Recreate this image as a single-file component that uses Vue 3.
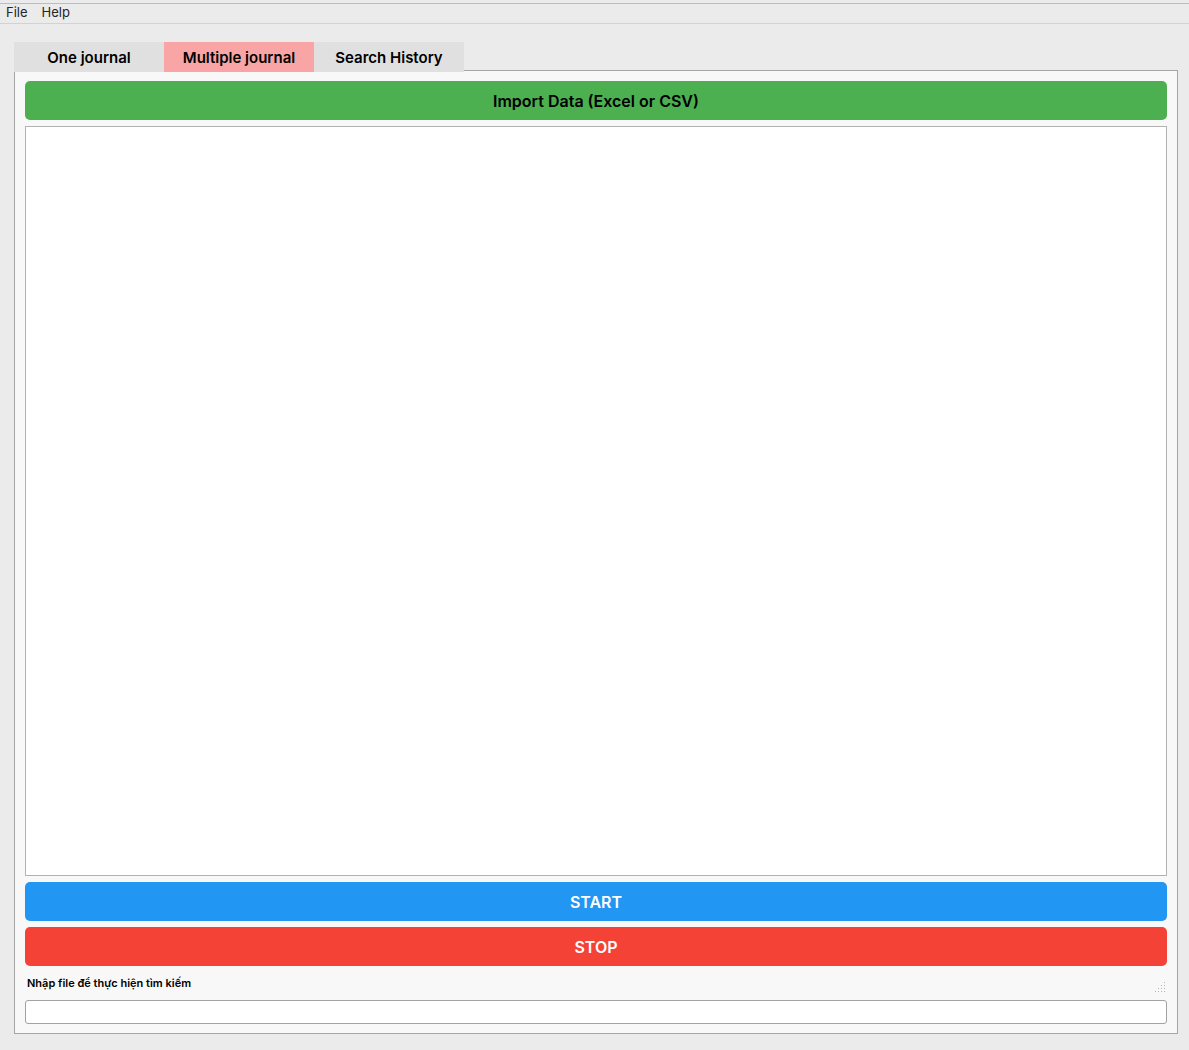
<script setup>
import { ref } from 'vue'

const menus = ['File', 'Help']
const tabs = ['One journal', 'Multiple journal', 'Search History']
const active = ref(1)
const output = ref('')
const query = ref('')

const gripDots = []
for (let row = 0; row < 4; row++) {
  for (let col = 3 - row; col < 4; col++) {
    gripDots.push({ x: col * 3, y: row * 3 })
  }
}
</script>

<template>
  <div class="window">
    <nav class="menubar">
      <button v-for="menu in menus" :key="menu" type="button" class="menu">{{ menu }}</button>
    </nav>
    <main class="content">
      <div class="tabs" role="tablist">
        <button
          v-for="(tab, i) in tabs"
          :key="tab"
          type="button"
          role="tab"
          class="tab"
          :class="{ active: i === active }"
          :aria-selected="i === active"
          @click="active = i"
        >{{ tab }}</button>
      </div>
      <section class="panel" role="tabpanel">
        <button type="button" class="action import">Import Data (Excel or CSV)</button>
        <textarea v-model="output" class="output" aria-label="Data" readonly></textarea>
        <button type="button" class="action start">START</button>
        <button type="button" class="action stop">STOP</button>
        <div class="status">
          <label for="query">Nhập file để thực hiện tìm kiếm</label>
          <svg class="grip" width="10" height="10" viewBox="0 0 10 10" shape-rendering="crispEdges" aria-hidden="true">
            <rect v-for="(dot, i) in gripDots" :key="i" :x="dot.x" :y="dot.y" width="1" height="1" />
          </svg>
        </div>
        <input id="query" v-model="query" type="text" class="query" />
      </section>
    </main>
  </div>
</template>

<style>
body {
  margin: 0;
  background: #ebebeb;
}
</style>

<style scoped>
.window {
  box-sizing: border-box;
  display: flex;
  flex-direction: column;
  min-height: 100vh;
  padding-top: 3px;
  background: #ebebeb;
  color: #000;
  font-family: Inter, "Liberation Sans", sans-serif;
}

button,
input,
textarea {
  box-sizing: border-box;
  margin: 0;
  font-family: inherit;
}

.menubar {
  display: flex;
  gap: 14px;
  padding: 0 6px;
  border-top: 1px solid #bdbdbd;
  border-bottom: 1px solid #d2d2d2;
}

.menu {
  height: 19px;
  padding: 0 0 2px;
  border: 0;
  background: none;
  color: #262626;
  font-size: 13px;
  line-height: 17px;
}

.content {
  flex: 1;
  display: flex;
  flex-direction: column;
  padding: 18px 11px 16px 14px;
}

.tabs {
  position: relative;
  z-index: 1;
  display: flex;
  margin-bottom: -2px;
}

.tab {
  width: 150px;
  height: 30px;
  padding: 2px 0 0;
  border: 0;
  background: #e0e0e0;
  color: #000;
  font-size: 15px;
  font-weight: 600;
  line-height: 28px;
}

.tab.active {
  background: #f9a5a5;
}

.panel {
  flex: 1;
  display: flex;
  flex-direction: column;
  gap: 6px;
  padding: 10px 10px 9px;
  border: 1px solid #a6a6a6;
  background: #f8f8f8;
}

.action {
  height: 39px;
  padding: 2px 0 0;
  border: 0;
  border-radius: 5px;
  color: #fff;
  font-size: 16px;
  font-weight: 600;
  line-height: 37px;
}

.import {
  background: #4caf50;
  color: #000;
}

.start {
  background: #2196f3;
}

.stop {
  background: #f44336;
}

.output {
  flex: 1;
  display: block;
  width: 100%;
  border: 1px solid #b2b2b2;
  border-radius: 0;
  background: #fff;
  resize: none;
  outline: none;
}

.status {
  display: flex;
  align-items: center;
  justify-content: space-between;
  height: 22px;
  padding: 0 2px;
  font-size: 11px;
  font-weight: 600;
  line-height: 22px;
}

.grip {
  align-self: flex-end;
  margin-bottom: 2px;
  fill: #b4b4b4;
}

.query {
  width: 100%;
  height: 24px;
  padding: 0 4px;
  border: 1px solid #a2a2a2;
  border-radius: 3px;
  background: #fff;
  font-size: 13px;
  outline: none;
}
</style>
